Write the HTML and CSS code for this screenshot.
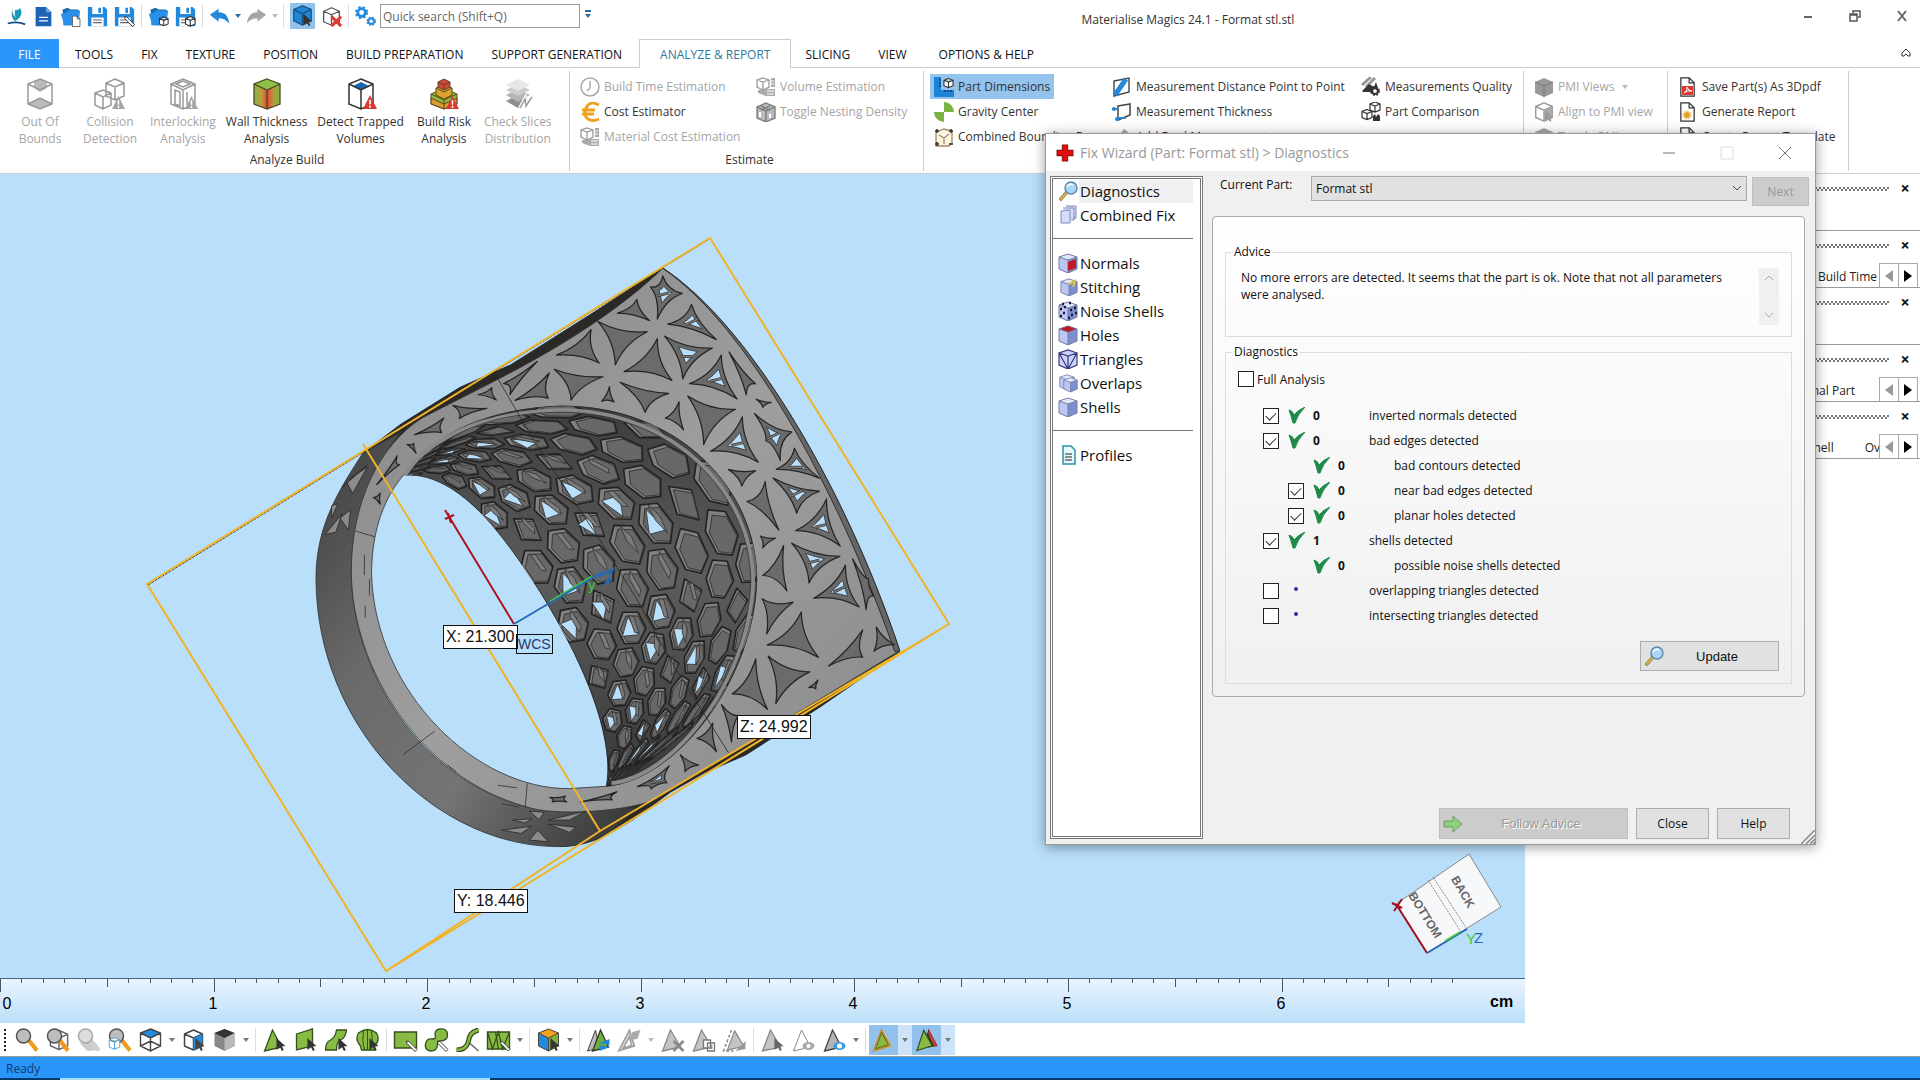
FILE: index.html
```html
<!DOCTYPE html>
<html lang="en">
<head>
	<title>Materialise Magics 24.1 - Format stl.stl</title>
	<meta charset="utf-8">
	<link rel="stylesheet" href="styles.css">
</head>
<body>
	<svg class="defs" aria-hidden="true">
		<defs>
			<symbol id="cube" viewBox="0 0 24 24"><path d="M12 2l9 4v12l-9 4-9-4V6z M3 6l9 4 9-4M12 10v12" fill="#fff" stroke="currentColor" stroke-width="1.5" stroke-linejoin="round"/></symbol>
			<symbol id="wirecube" viewBox="0 0 24 24"><path d="M12 1l10 4v13l-10 5-10-5V5z" fill="#fff"/><path d="M2 5l10-4 10 4-10 5z" fill="#2389dc"/><path d="M12 1l10 4v13l-10 5-10-5V5zM2 5l10 5 10-5M12 10v13M2 18l10-5 10 5" fill="none" stroke="#444" stroke-width="1.4"/></symbol>
			<symbol id="warn" viewBox="0 0 12 12"><path d="M6 0l6 12H0z" fill="currentColor"/><path d="M6 4v4M6 9v2" stroke="#fff" stroke-width="1.4"/></symbol>
			<symbol id="cursor" viewBox="0 0 12 14"><path d="M1 0l10 9-4 0 2 4-2 1-2-4-4 3z" fill="currentColor"/></symbol>
			<symbol id="pen" viewBox="0 0 12 12"><path d="M1 1l2.500 .5 8 8-2 2-8-8z" fill="#fff" stroke="#333"/></symbol>
			<symbol id="folder" viewBox="0 0 24 24"><path d="M3 4l6-2 3 2h9l1 18H4z" fill="#1768ac"/><path d="M1 9l5-1 3-3h14l-2 17H5z" fill="#2990ea"/></symbol>
			<symbol id="disk" viewBox="0 0 24 24"><path d="M1 1h19l3 3v19H1z" fill="#2389dc"/><path d="M6 1h12v8H6zM5 13h14v10H5z" fill="#fff"/><path d="M13 2h3v6h-3z" fill="#2389dc"/><path d="M7 16h10M7 19h10" stroke="#666" stroke-width="1.4"/></symbol>
			<symbol id="page" viewBox="0 0 20 24"><path d="M2 1h10l6 6v16H2z" fill="#fff" stroke="#333" stroke-width="1.5"/><path d="M12 1v6h6" fill="none" stroke="#333" stroke-width="1.5"/></symbol>
			<symbol id="minicube" viewBox="0 0 12 12"><path d="M6 1l5 2v6l-5 2-5-2V3zM1 3l5 2 5-2M6 5v6" fill="#fff" stroke="#333" stroke-width="1.2"/></symbol>
			<symbol id="lens" viewBox="0 0 24 24"><path d="M13 14l3-3 8 10-3 3z" fill="#f09a1c"/><circle cx="9" cy="8" r="7" fill="#bdbdbd" stroke="#555" stroke-width="1.5"/></symbol>
			<symbol id="search" viewBox="0 0 20 20"><path d="M8 10l2 2-7 8-2-2z" fill="#d9b04a" stroke="#77705a" stroke-width=".8"/><circle cx="13" cy="7" r="6" fill="#a9d6f5" stroke="#5b87a8" stroke-width="1.4"/><path d="M9 6q2-4 6-2" stroke="#fff" stroke-width="1.5" fill="none"/></symbol>
			<symbol id="bluecube" viewBox="0 0 20 20"><path d="M1 4l9-3 9 3v12l-9 4-9-4z" fill="#bcc6f2"/><path d="M10 7l9-3v12l-9 4z" fill="#7e8fd0"/><path d="M1 4l9-3 9 3-9 3z" fill="#e2e8fb"/><path d="M1 4l9-3 9 3v12l-9 4-9-4zM1 4l9 3 9-3M10 7v13" fill="none" stroke="#737da5"/></symbol>
			<symbol id="tri" viewBox="0 0 24 24"><path d="M10 2l9 17-17 4z" fill="#87bb43" stroke="#35501d" stroke-width="1.3"/></symbol>
			<symbol id="graytri" viewBox="0 0 24 24"><path d="M10 2l10 17-18 4z" fill="#c4c4c4" stroke="#888" stroke-width="1.3"/></symbol>
			<symbol id="tick" viewBox="0 0 17 17"><path d="M1 3q4 1 5 5Q10 3 17 0q-8 8-10 16H5Q3 8 1 3z" fill="#1d8a4a" stroke="#1d8a4a"/></symbol>
			<symbol id="gearlet" viewBox="0 0 12 12"><circle cx="6" cy="6" r="3.500" fill="#fff" stroke="currentColor" stroke-width="2.500"/><circle cx="6" cy="6" r="5" fill="none" stroke="currentColor" stroke-width="2" stroke-dasharray="2 2"/></symbol>
			<symbol id="calc" viewBox="0 0 20 20"><path d="M7 1l6 2v7l-6 3-6-3V3zM1 3l6 2 6-2M7 5v8" fill="#fff" stroke="#999" stroke-width="1.300"/><path d="M2 13h8v6l-8-3zM10 12h9v7h-9zM15 1h4v9h-4z" fill="#aaa"/><path d="M11 14h7M11 17h7M15 4h3M15 7h3" stroke="#fff"/></symbol>
		</defs>
	</svg>

	<header class="titlebar">
		<div class="quick">
			<svg class="qi" viewBox="0 0 22 24"><path d="M6 3q-2 12 4 14Q20 11 15 2q-2 4-5 2-2 4 0 9Q6 9 6 3z" fill="#1c98b8"/><path d="M1 20q11-3 20 1" stroke="#164f84" stroke-width="2" fill="none"/></svg>
			<svg class="qi" viewBox="0 0 24 24"><path d="M3 1h12l6 6v16H3z" fill="#1d63b4"/><path d="M15 1v6h6z" fill="#6aaae8"/><path d="M7 13h10M7 17h10" stroke="#fff" stroke-width="1.500"/></svg>
			<svg class="qi" viewBox="0 0 24 24"><use href="#folder"/><use href="#page" x="13" y="11" width="11" height="13"/></svg>
			<svg class="qi" viewBox="0 0 24 24"><use href="#disk"/></svg>
			<svg class="qi" viewBox="0 0 24 24"><use href="#disk"/><use href="#pen" x="11" y="11" width="13" height="13"/></svg>
			<i class="qsep"></i>
			<svg class="qi" viewBox="0 0 24 24"><use href="#folder"/><use href="#minicube" x="12" y="11" width="12" height="13"/></svg>
			<svg class="qi" viewBox="0 0 24 24"><use href="#disk"/><use href="#minicube" x="11" y="11" width="13" height="13"/></svg>
			<i class="qsep"></i>
			<svg class="qi" viewBox="0 0 24 24"><path d="M1 10l10-7v4q11 0 12 13-5-6-12-6v4z" fill="#2389dc"/></svg>
			<i class="caret blue"></i>
			<svg class="qi" viewBox="0 0 24 24"><path d="M23 10L13 3v4Q2 7 1 20q5-6 12-6v4z" fill="#a5a5a5"/></svg>
			<i class="caret pale"></i>
			<i class="qsep"></i>
			<span class="qon"><svg class="qi" viewBox="0 0 24 24"><path d="M12 1l10 4v13l-10 5-10-5V5z" fill="#1f86d8"/><path d="M12 1l10 4v13l-10 5-10-5V5zM2 5l10 5 10-5M12 10v13" fill="none" stroke="#1d4f82" stroke-width="1.400"/><g color="#333"><use href="#cursor" x="12" y="10" width="12" height="14"/></g></svg></span>
			<svg class="qi" viewBox="0 0 24 24" color="#555"><use href="#cube"/><path d="M12 12l11 11M23 12L12 23" stroke="#e03a32" stroke-width="3.500"/></svg>
			<i class="qsep"></i>
			<svg class="qi" viewBox="0 0 24 24" color="#2389dc"><use href="#gearlet" x="0" y="0" width="15" height="15"/><use href="#gearlet" x="13" y="12" width="11" height="11"/></svg>
			<input class="quick-search" type="text" aria-label="Quick search" placeholder="Quick search (Shift+Q)">
			<i class="caret blue bar"></i>
		</div>
		<div class="app-title">Materialise Magics 24.1 - Format stl.stl</div>
		<div class="winbtns">
			<button aria-label="Minimize"><svg viewBox="0 0 12 12"><path d="M2 7h8" stroke="#666" stroke-width="2"/></svg></button>
			<button aria-label="Restore"><svg viewBox="0 0 12 12"><path d="M4 3V1h7v6H9M1 4h7v7H1zM1 5h7" fill="none" stroke="#555" stroke-width="1.500"/></svg></button>
			<button aria-label="Exit"><svg viewBox="0 0 12 12"><path d="M2 1l8 10M10 1L2 11" stroke="#666" stroke-width="2"/></svg></button>
		</div>
	</header>

	<nav class="tabs">
		<button class="tab file">FILE</button>
		<button class="tab">TOOLS</button>
		<button class="tab">FIX</button>
		<button class="tab">TEXTURE</button>
		<button class="tab">POSITION</button>
		<button class="tab">BUILD PREPARATION</button>
		<button class="tab">SUPPORT GENERATION</button>
		<button class="tab active">ANALYZE &amp; REPORT</button>
		<button class="tab">SLICING</button>
		<button class="tab">VIEW</button>
		<button class="tab last">OPTIONS &amp; HELP</button>
		<svg class="collapse" viewBox="0 0 10 10"><path d="M1 5l4-4 4 4v3H7L5 6 3 8H1z" fill="none" stroke="#333"/></svg>
	</nav>

	<section class="ribbon">
		<div class="group analyze">
			<div class="bigs">
				<button class="big off"><svg viewBox="0 0 32 32"><path d="M16 1l12 5v20l-12 5-12-5V6z" fill="#fff"/><path d="M10 3l6-2 7 3v6l-7 4-6-4zM4 26l12-6 12 6-12 5z" fill="#bbb"/><path d="M16 1l12 5v20l-12 5-12-5V6zM4 6l12 6 12-6M4 26l12-6 12 6" fill="none" stroke="#999" stroke-width="1.500"/></svg>Out Of<br>Bounds</button>
				<button class="big off"><svg viewBox="0 0 32 32"><path d="M21 1l9 4v13l-9 4-9-4V5zM12 5l9 4 9-4M21 9v13M9 12l8 3v12l-8 4-8-4V15zM1 15l8 4 8-4M9 19v12" fill="#fff" stroke="#999" stroke-width="1.500"/><use href="#warn" x="18" y="18" width="13" height="13"/></svg>Collision<br>Detection</button>
				<button class="big off"><svg viewBox="0 0 32 32"><path d="M16 1l12 5v20l-12 5-12-5V6zM4 6l12 6 12-6M16 12v19M8 12v14l5 2V14zM9 6l7-3 7 3-7 3zM20 14v13" fill="#fff" stroke="#999" stroke-width="1.500"/><use href="#warn" x="18" y="18" width="13" height="13"/></svg>Interlocking<br>Analysis</button>
				<button class="big"><svg viewBox="0 0 32 32"><defs><linearGradient id="heat"><stop offset="0" stop-color="#83b840"/><stop offset=".3" stop-color="#c09a3e"/><stop offset=".5" stop-color="#e8432f"/><stop offset=".75" stop-color="#b49a3e"/><stop offset="1" stop-color="#83b840"/></linearGradient></defs><path d="M16 1l13 5v20l-13 5-13-5V6z" fill="url(#heat)"/><path d="M3 6l13-5 13 5-13 6z" fill="#8cc047"/><path d="M16 1l13 5v20l-13 5-13-5V6zM3 6l13 6 13-6M16 12v19" fill="none" stroke="#4b4a25" stroke-width="1.300"/></svg>Wall Thickness<br>Analysis</button>
				<button class="big"><svg viewBox="0 0 32 32"><path d="M16 1l12 5v20l-12 5-12-5V6z" fill="#fff"/><path d="M8 8l8-4 8 4-8 4z" fill="#1668ae"/><path d="M16 1l12 5v20l-12 5-12-5V6zM4 6l12 6 12-6M16 12v19" fill="none" stroke="#333" stroke-width="1.500"/><g color="#da3832"><use href="#warn" x="18" y="17" width="14" height="14"/></g></svg>Detect Trapped<br>Volumes</button>
				<button class="big"><svg viewBox="0 0 32 32" stroke="#5a4a20"><path d="M16 10l13 6v10l-13 5-13-5V16z" fill="#94b83c"/><path d="M3 20l13 6 13-6v6l-13 5-13-5z" fill="#d99a30"/><path d="M16 6l8 4v7l-8 4-8-4v-7z" fill="#dfa42c"/><path d="M16 1l6 3v5l-6 3-6-3V4z" fill="#d9443a"/><path d="M3 16l13 6 13-6M16 22v9M10 4l6 3 6-3M16 7v5M8 10l8 4 8-4" fill="none"/><g color="#da3832" stroke="none"><use href="#warn" x="18" y="18" width="13" height="13"/></g></svg>Build Risk<br>Analysis</button>
				<button class="big off"><svg viewBox="0 0 32 32"><path d="M4 23l12-6 12 6-12 7z" fill="#8d8d8d"/><path d="M4 17l12-6 12 6-12 7z" fill="#b4b4b4"/><path d="M4 12l12-6 12 6-12 6z" fill="#ccc"/><path d="M4 7l12-6 12 6-12 6z" fill="#e6e6e6"/><path d="M18 30l5-9 1 7 6-9" fill="none" stroke="#fff" stroke-width="4"/><path d="M18 30l5-9 1 7 6-9" fill="none" stroke="#999" stroke-width="1.500"/></svg>Check Slices<br>Distribution</button>
			</div>
			<div class="group-name">Analyze Build</div>
		</div>
		<div class="group estimate">
			<div class="cols">
				<div class="col">
					<button class="row off"><svg viewBox="0 0 20 20"><circle cx="10" cy="10" r="9" fill="#fff" stroke="#aaa" stroke-width="1.500"/><path d="M10 4v7l-3 3" fill="none" stroke="#aaa" stroke-width="1.500"/></svg>Build Time Estimation</button>
					<button class="row"><svg viewBox="0 0 20 20"><path d="M19 3Q10-2 6 6q-3 7 2 11 5 3 11 0M2 8h13M2 12h12" fill="none" stroke="#eea21c" stroke-width="2.800"/></svg>Cost Estimator</button>
					<button class="row off"><svg viewBox="0 0 20 20"><use href="#calc"/></svg>Material Cost Estimation</button>
				</div>
				<div class="col">
					<button class="row off"><svg viewBox="0 0 20 20"><use href="#calc"/></svg>Volume Estimation</button>
					<button class="row off"><svg viewBox="0 0 20 20"><path d="M10 1l9 4v11l-9 4-9-4V5z" fill="#bbb"/><path d="M10 1l9 4v11l-9 4-9-4V5zM1 5l9 4 9-4M10 9v11M5 4l9 4M14 4L5 8" fill="none" stroke="#777" stroke-width="1.300"/><path d="M4 10v5M14 12v4" stroke="#fff" stroke-width="2"/></svg>Toggle Nesting Density</button>
				</div>
			</div>
			<div class="group-name">Estimate</div>
		</div>
		<div class="group measure">
			<div class="cols">
				<div class="col">
					<button class="row on"><svg viewBox="0 0 20 20"><path d="M0 0h7v13h13v7H0z" fill="#1c83d6"/><path d="M7 3H5m2 3H5m2 3H5m6 6v-2m3 2v-2m3 2v-2" stroke="#114"/><use href="#minicube" x="9" y="0" width="11" height="12"/></svg>Part Dimensions</button>
					<button class="row"><svg viewBox="0 0 20 20"><path d="M10 0v10h10A10 10 0 0 0 10 0zM10 20V10H0a10 10 0 0 0 10 10z" fill="#7ab342"/></svg>Gravity Center</button>
					<button class="row"><svg viewBox="0 0 20 20"><path d="M2 5l8-3 8 2v12l-3 3H2zM5 8l5 3 5-4M10 11v6" fill="#fff4d8" stroke="#987" stroke-width="1.300"/><path d="M1 4h4M3 2v4M15 4h4M17 2v4M1 17h4M3 15v4M15 17h4" stroke="#333" stroke-width="1.500"/></svg>Combined Bounding Box</button>
				</div>
				<div class="col">
					<button class="row"><svg viewBox="0 0 20 20"><path d="M2 4l15-3v14L2 19z" fill="#fff" stroke="#444" stroke-width="1.400"/><path d="M14 2L3 18" stroke="#2389dc" stroke-width="5"/></svg>Measurement Distance Point to Point</button>
					<button class="row"><svg viewBox="0 0 20 20"><path d="M6 4l12-2v11L6 18z" fill="#fff" stroke="#444" stroke-width="1.500"/><path d="M0 7h6M4 16h10" stroke="#2389dc" stroke-width="2"/><circle cx="2" cy="7" r="2" fill="#2389dc"/><circle cx="5" cy="17" r="2" fill="#2389dc"/></svg>Measurement Thickness</button>
					<button class="row"><svg viewBox="0 0 20 20"><path d="M1 16l11-14 4 3-4 10 6-5v9H3z" fill="#aaa"/></svg>Add Dual Measurement</button>
				</div>
				<div class="col">
					<button class="row"><svg viewBox="0 0 20 20" color="#333"><path d="M1 8l9-8M5 10l9-9" stroke="#999" stroke-width="3"/><path d="M1 14l7-7 5 3 2-5 3 10H2z" fill="#333"/><use href="#gearlet" x="9" y="9" width="10" height="10"/></svg>Measurements Quality</button>
					<button class="row"><svg viewBox="0 0 20 20"><use href="#minicube" x="8" y="-1" width="12" height="12"/><use href="#minicube" x="0" y="6" width="12" height="13"/><path d="M12 19v-5l2-2 1 3 2-3 2 2v5z" fill="#333"/></svg>Part Comparison</button>
				</div>
			</div>
		</div>
		<div class="group pmi">
			<div class="col">
				<button class="row off"><svg viewBox="0 0 20 20"><path d="M10 1l9 4v11l-9 4-9-4V5z" fill="#999"/><path d="M1 5l9 4 9-4M10 9v11" fill="none" stroke="#777"/></svg>PMI Views<i class="caret pale"></i></button>
				<button class="row off"><svg viewBox="0 0 20 20" color="#999"><use href="#cube" x="-1" y="-1" width="22" height="22"/><path d="M10 9l8-4v11l-8 4z" fill="#aaa"/><use href="#cursor" x="10" y="8" width="10" height="12"/></svg>Align to PMI view</button>
				<button class="row off"><svg viewBox="0 0 20 20"><path d="M10 1l9 4v11l-9 4-9-4V5z" fill="#aaa"/></svg>Toggle PMI</button>
			</div>
		</div>
		<div class="group report">
			<div class="col">
				<button class="row"><svg viewBox="0 0 20 20"><use href="#page" x="1" y="0" width="17" height="20"/><path d="M4 9h11v9H4z" fill="#dc3a33"/><path d="M6 16q4-2 3-6 1 4 5 4-5-1-8 2" fill="none" stroke="#fff"/></svg>Save Part(s) As 3Dpdf</button>
				<button class="row"><svg viewBox="0 0 20 20" color="#e8a020"><use href="#page" x="1" y="0" width="17" height="20"/><circle cx="9" cy="13" r="3" fill="#e8a020"/><circle cx="9" cy="13" r="4" fill="none" stroke="#e8a020" stroke-dasharray="2 1"/></svg>Generate Report</button>
				<button class="row"><svg viewBox="0 0 20 20"><use href="#page" x="1" y="0" width="17" height="20"/></svg>Create Report Template</button>
			</div>
		</div>
	</section>

	<main class="work">
		<div class="stage">
			<svg class="scene" viewBox="0 174 1525 804" preserveAspectRatio="xMinYMin slice">
				<defs>
					<linearGradient id="side" x1="0" x2="1" y1="0" y2="1"><stop offset="0" stop-color="#3c3c3c"/><stop offset=".35" stop-color="#6a6a6a"/><stop offset=".65" stop-color="#747474"/><stop offset="1" stop-color="#303030"/></linearGradient>
					<linearGradient id="face" x1="0" x2="1" y1="0" y2="1"><stop offset="0" stop-color="#858585"/><stop offset=".5" stop-color="#9e9e9e"/><stop offset="1" stop-color="#8a8a8a"/></linearGradient>
					<linearGradient id="bore" x1="0" x2="0" y1="0" y2="1"><stop offset="0" stop-color="#3d3d3d"/><stop offset=".45" stop-color="#5c5c5c"/><stop offset="1" stop-color="#383838"/></linearGradient>
					<clipPath id="boreclip"><path d="M250 625C290 550 420 462 620 456C900 455 1085 660 1085 880C1080 1120 900 1370 728 1387C760 1200 560 870 450 740C390 670 320 620 250 625z"/></clipPath>
				</defs>
				<path d="M147 584L710 237" stroke="#333" stroke-dasharray="3 1" transform="translate(1 1)"/>
				<!-- ring model, drawn in its own space -->
				<g transform="translate(300 220) scale(.4209 .4082)" stroke-linejoin="round">
					<path d="M862 116L700 225 600 290 500 355 380 410 240 500 150 570 240 560 500 420 850 150z" fill="#2a2926" stroke="#222" stroke-width="2"/>
					<path d="M1425 1058L1240 1190 1060 1310 960 1355 880 1402 790 1470C740 1500 700 1532 620 1535L640 1420 900 1360 1380 1055z" fill="#2a2926" stroke="#222" stroke-width="2"/>
					<path d="M150 570C80 680 38 760 38 880C40 1250 330 1540 620 1535C700 1532 740 1500 800 1440L540 1438C280 1370 122 1100 122 860C122 740 160 620 240 520z" fill="url(#side)" stroke="#333" stroke-width="2"/>
					<path fill-rule="evenodd" d="M862 118C1060 250 1290 640 1425 1055L1050 1290 830 1425C760 1450 600 1460 540 1438C290 1370 122 1100 122 860C122 690 190 550 290 485L480 385C620 310 760 220 862 118zM250 620C190 690 170 780 170 870C180 1160 420 1395 640 1393L730 1387C900 1370 1080 1120 1085 880C1085 660 900 455 620 456C450 462 320 520 250 620z" fill="url(#face)" stroke="#333" stroke-width="2"/>
					<path d="M862 118C1060 250 1290 640 1425 1055l-12 2C1270 640 1060 260 862 118z" fill="#666" stroke="#222" stroke-width="2"/>
					<path d="M250 625C290 550 420 462 620 456C900 455 1085 660 1085 880C1080 1120 900 1370 728 1387C760 1200 560 870 450 740C390 670 320 620 250 625z" fill="url(#bore)" stroke="#222" stroke-width="2"/>
					<g id="lattice" clip-path="url(#boreclip)"></g>
					<g id="petals"></g>
					<path d="M250 625C290 550 420 470 620 466C890 466 1075 670 1076 885C1070 1110 900 1360 740 1380" fill="none" stroke="#8a8a8a" stroke-width="10"/>
					<path d="M270 612C340 520 460 472 620 471C885 471 1070 670 1071 885C1065 1110 900 1350 740 1374M132 762l46 14M245 1310l75-58M540 1380l-5 60M153 820v50M165 880v40M155 945v30M350 1335l22 18M470 1385l45 6M480 1430l40 8" fill="none" stroke="#333" stroke-width="2"/>
					<g fill="#8b8b8b" stroke="#292929" stroke-width="2">
						<path d="M100 655l60-55-25 20zM60 770l40-50-15 45zM110 640l50-35-35 65zM95 730l25-20-5 50zM75 700l15-5-15 35z"/>
						<path d="M505 1470l45-3-15 10zM545 1448l35 3-12 18zM590 1470l90-22-40 22zM480 1495l70-10-25 18zM590 1480l65 8-15 12zM565 1495l25 28-45-4z"/>
					</g>
					<path d="M468 385l90 160 155 240 85 140 80 150 140 230" fill="none" stroke="#2d2a1c" stroke-width="2"/>
				</g>
				<g fill="none" stroke="#f0b429" stroke-width="2">
					<path d="M710 238L949 624 386 971 147 584zM363 444L600 831M386 971L600 831 949 624"/>
				</g>
				<path d="M445 510L514 624M445 519l9-4M448 513l3 10" stroke="#b01020" stroke-width="2"/>
				<path d="M550 602L592 577" stroke="#43c83b" stroke-width="3"/>
				<path d="M514 624L604 571M598 577l15-8-7 14 6-3" stroke="#2669b8" stroke-width="2" fill="none"/>
				<text x="588" y="590" class="axis green">y</text>
				<g class="navcube">
					<path d="M1396 904l73-50 32 53-74 46z" fill="#f7f8fa" stroke="#888"/>
					<path d="M1428 880l33 52M1433 877l34 52" fill="none" stroke="#888" stroke-dasharray="2 1"/>
					<path d="M1396 904l31 49M1392 903l10 5M1394 911l8-12" stroke="#a3101c" stroke-width="2"/>
					<path d="M1427 953l40-24" stroke="#2669b8" stroke-width="2"/><path d="M1445 941l15-9" stroke="#43c83b" stroke-width="2"/>
					<text class="facename" x="1463" y="896" transform="rotate(60 1463 892)">BACK</text>
					<text class="facename" x="1425" y="919" transform="rotate(58 1425 915)">BOTTOM</text>
					<text x="1466" y="944" class="axis green">Y</text><text x="1474" y="943" class="axis">Z</text>
				</g>
			</svg>
			<span class="dim dim-x">X: 21.300</span>
			<span class="dim wcs">WCS</span>
			<span class="dim dim-y">Y: 18.446</span>
			<span class="dim dim-z">Z: 24.992</span>
		</div>
		<svg class="ruler" id="ruler"></svg>
		<aside class="docks">
			<div class="dock"><i class="grip"></i><button class="x" aria-label="Close panel">×</button></div>
			<div class="dock"><i class="grip"></i><button class="x" aria-label="Close panel">×</button><div class="dock-tabs"><span>Build Time</span><button aria-label="Previous"><i></i></button><button aria-label="Next tab"><i></i></button></div></div>
			<div class="dock"><i class="grip"></i><button class="x" aria-label="Close panel">×</button></div>
			<div class="dock"><i class="grip"></i><button class="x" aria-label="Close panel">×</button><div class="dock-tabs"><span class="gap">Internal Part</span><button aria-label="Previous"><i></i></button><button aria-label="Next tab"><i></i></button></div></div>
			<div class="dock"><i class="grip"></i><button class="x" aria-label="Close panel">×</button><div class="dock-tabs"><span class="gap">Shell</span><span class="cut">Ov</span><button aria-label="Previous"><i></i></button><button aria-label="Next tab"><i></i></button></div></div>
		</aside>
	</main>

	<footer class="viewbar">
		<i class="dots"></i>
		<svg viewBox="0 0 24 24"><use href="#lens"/></svg>
		<svg viewBox="0 0 24 24" color="#666"><use href="#cube" x="2" y="0" width="23" height="24"/><use href="#lens"/></svg>
		<svg viewBox="0 0 24 24" class="faded"><path d="M3 15l8-2 13 9-13 1z" fill="#999"/><use href="#lens"/></svg>
		<svg viewBox="0 0 24 24" color="#3a9be0"><use href="#lens"/><use href="#cube" x="0" y="8" width="14" height="15"/></svg>
		<svg viewBox="0 0 24 24"><use href="#wirecube"/></svg><i class="caret"></i>
		<svg viewBox="0 0 24 24" color="#444"><use href="#cube" width="24" height="24"/><path d="M12 10l9-4v12l-9 4z" fill="#2389dc"/><use href="#cursor" x="13" y="10" width="11" height="13"/></svg>
		<svg viewBox="0 0 24 24"><path d="M12 1l10 4v13l-10 5-10-5V5z" fill="#888"/><path d="M12 10l10-5v13l-10 5z" fill="#b8b8b8"/><path d="M12 1l10 4-10 5L2 5z" fill="#333"/></svg><i class="caret"></i>
		<i class="bsep"></i>
		<svg viewBox="0 0 24 24" color="#333"><use href="#tri"/><use href="#cursor" x="13" y="10" width="11" height="13"/></svg>
		<svg viewBox="0 0 24 24" color="#333"><path d="M3 6l16-5v17L3 22z" fill="#87bb43" stroke="#35501d" stroke-width="1.300"/><use href="#cursor" x="13" y="10" width="11" height="13"/></svg>
		<svg viewBox="0 0 24 24" color="#333"><path d="M12 2h10q-1 8-6 10-4 2-4 10H1q0-8 5-10 5-3 6-10z" fill="#87bb43" stroke="#35501d" stroke-width="1.300"/><use href="#cursor" x="13" y="10" width="11" height="13"/></svg>
		<svg viewBox="0 0 24 24" color="#333"><path d="M5 18Q-1 11 3 5q9-7 18 0 4 7-2 13v4H6z" fill="#87bb43" stroke="#35501d" stroke-width="1.300"/><path d="M8 3q-2 9 1 19M12 1v21M16 3q2 9-1 19" fill="none" stroke="#35501d"/><use href="#cursor" x="13" y="10" width="11" height="13"/></svg>
		<i class="bsep"></i>
		<svg viewBox="0 0 24 24"><path d="M1 4h22v16H1z" fill="#87bb43" stroke="#35501d" stroke-width="1.400"/><use href="#pen" x="12" y="12" width="12" height="12"/></svg>
		<svg viewBox="0 0 24 24"><path d="M11 9Q9 2 15 1q8-1 8 6 0 6-8 6-2 0-2 3 0 7-7 7-6-1-5-7 1-6 7-5 3 0 3-2z" fill="#87bb43" stroke="#35501d" stroke-width="1.300"/><use href="#pen" x="12" y="12" width="12" height="12"/></svg>
		<svg viewBox="0 0 24 24"><path d="M1 22q10 0 12-9 1-9 10-11" fill="none" stroke="#35501d" stroke-width="5"/><path d="M1 22q10 0 12-9 1-9 10-11" fill="none" stroke="#87bb43" stroke-width="2.500"/><path d="M13 14l10 9" stroke="#666" stroke-width="1.500"/></svg>
		<svg viewBox="0 0 24 24"><path d="M1 4h22v17H1z" fill="#87bb43" stroke="#35501d" stroke-width="1.400"/><path d="M1 4l5 17 6-17 4 17 7-17M9 4l3 17" fill="none" stroke="#35501d" stroke-width="1.300"/><use href="#pen" x="13" y="12" width="11" height="12"/></svg><i class="caret"></i>
		<i class="bsep"></i>
		<svg viewBox="0 0 24 24" color="#333"><path d="M2 5l10 5v13L2 18z" fill="#2389dc"/><path d="M12 10l10-5v13l-10 5z" fill="#7eb23d"/><path d="M12 1l10 4-10 5L2 5z" fill="#f3a01c"/><path d="M12 1l10 4v13l-10 5-10-5V5zM2 5l10 5 10-5M12 10v13" fill="none" stroke="#444"/><use href="#cursor" x="13" y="10" width="11" height="13"/></svg><i class="caret"></i>
		<i class="bsep"></i>
		<svg viewBox="0 0 24 24"><path d="M9 2l4 18-12 3z" fill="#bbb" stroke="#444"/><path d="M14 2l8 17-16 4z" fill="#6fae38" stroke="#333" stroke-width="1.300"/><path d="M13 15l10-4v6zM23 19l-10 4v-6z" fill="#2389dc"/></svg>
		<svg viewBox="0 0 24 24"><path d="M12 2l5 16-16 5zM12 9l-6 11 8-3z" fill="#ccc" stroke="#999" stroke-width="1.300"/><path d="M12 12l3-8 8-2-3 9z" fill="#aaa"/></svg><i class="caret pale"></i>
		<svg viewBox="0 0 24 24"><use href="#graytri"/><path d="M13 13l10 10M23 13L13 23" stroke="#888" stroke-width="2.500"/></svg>
		<svg viewBox="0 0 24 24"><use href="#graytri"/><path d="M12 12h7v8h-7zM16 15h7v8h-7zM18 18h3M18 20h3" fill="#fff" stroke="#777" stroke-width="1.300"/></svg>
		<svg viewBox="0 0 24 24"><path d="M9 2L1 23h10" fill="none" stroke="#888" stroke-dasharray="3 2" stroke-width="1.500"/><use href="#graytri" x="3" y="0" width="22" height="24"/><path d="M13 23l10-10v8z" fill="#999"/></svg>
		<i class="bsep"></i>
		<svg viewBox="0 0 24 24" color="#666"><use href="#graytri"/><use href="#cursor" x="13" y="10" width="11" height="13"/></svg>
		<svg viewBox="0 0 24 24"><path d="M10 2l9 17-17 4z" fill="#fff" stroke="#888"/><ellipse cx="17" cy="18" rx="6" ry="4" fill="#aaa"/><circle cx="17" cy="18" r="2" fill="#fff"/></svg>
		<svg viewBox="0 0 24 24"><path d="M10 2l9 17-17 4z" fill="#b5b5b5" stroke="#444" stroke-width="1.300"/><ellipse cx="17" cy="18" rx="6" ry="4" fill="#3a9be0"/><circle cx="17" cy="18" r="2.500" fill="#fff"/></svg><i class="caret"></i>
		<i class="bsep"></i>
		<svg viewBox="0 0 24 24" class="lit"><path d="M12 2l9 17-7 1z" fill="#ccc"/><path d="M10 2l9 16-17 5z" fill="#8db840" stroke="#c78e2a" stroke-width="2"/><path d="M10 4l7 13-13 4z" fill="none" stroke="#4b6b22"/></svg><span class="tint"><i class="caret"></i></span>
		<svg viewBox="0 0 24 24" class="lit"><path d="M14 1l9 17-8 1z" fill="#d8402f" stroke="#822"/><path d="M12 2l8 16-6 2z" fill="#333"/><path d="M9 2l9 16-16 5z" fill="#87bb43" stroke="#35501d" stroke-width="1.300"/></svg><span class="tint"><i class="caret"></i></span>
	</footer>
	<div class="status">Ready</div>
	<div class="strip"></div>

	<section class="wizard" role="dialog" aria-label="Fix Wizard">
		<header class="wiz-title">
			<svg viewBox="0 0 17 17"><path d="M6 1h5v5h5v5h-5v5H6v-5H1V6h5z" fill="#e60c0c" stroke="#8c1010"/></svg>
			<span>Fix Wizard (Part: Format stl) &gt; Diagnostics</span>
			<button aria-label="Minimize"><svg viewBox="0 0 14 14"><path d="M1 7h12" stroke="#777"/></svg></button>
			<button aria-label="Maximize"><svg viewBox="0 0 14 14"><path d="M1 1h12v12H1z" fill="none" stroke="#ddd"/></svg></button>
			<button aria-label="Close wizard"><svg viewBox="0 0 14 14"><path d="M1 1l12 12M13 1L1 13" stroke="#777"/></svg></button>
		</header>
		<div class="wiz-body">
			<nav class="pages">
				<button class="pg current"><svg viewBox="0 0 20 20"><use href="#search"/></svg><span>Diagnostics</span></button>
				<button class="pg"><svg viewBox="0 0 20 20"><path d="M8 1h10v12h-3M5 3h11v12h-3M3 6l9-1v13H3z" fill="#d5dcf7" stroke="#7b8cbb"/></svg><span>Combined Fix</span></button>
				<hr>
				<button class="pg"><svg viewBox="0 0 20 20"><use href="#bluecube"/><path d="M10 9l8-3v9l-8 3z" fill="#c11c25"/></svg><span>Normals</span></button>
				<button class="pg"><svg viewBox="0 0 20 20"><use href="#bluecube" x="2" y="1" width="18" height="18"/><path d="M11 7l6-3-2 6" fill="none" stroke="#ddc23a" stroke-width="2"/></svg><span>Stitching</span></button>
				<button class="pg"><svg viewBox="0 0 20 20"><use href="#bluecube"/><path d="M4 3h2M11 2h2M6 6h2M2 8h2M5 12h2M2 15h2M12 9h2M16 7h2M13 14h2M17 12h2M10 17h2" stroke="#16183a" stroke-width="2.500"/></svg><span>Noise Shells</span></button>
				<button class="pg"><svg viewBox="0 0 20 20"><use href="#bluecube"/><path d="M2 4l8-3 8 3-8 3z" fill="#b81c30"/></svg><span>Holes</span></button>
				<button class="pg"><svg viewBox="0 0 20 20"><path d="M1 4l9-3 9 3v12l-9 4-9-4z" fill="#cdd3f8"/><path d="M1 4l9 16 9-16M10 7v13M1 4l9 3 9-3v12l-9 4-9-4V4l9-3 9 3" fill="none" stroke="#34397d" stroke-width="1.200"/></svg><span>Triangles</span></button>
				<button class="pg"><svg viewBox="0 0 20 20"><use href="#bluecube" x="1" y="0" width="16" height="18"/><use href="#bluecube" x="5" y="3" width="15" height="17"/></svg><span>Overlaps</span></button>
				<button class="pg"><svg viewBox="0 0 20 20"><use href="#bluecube"/></svg><span>Shells</span></button>
				<hr>
				<button class="pg"><svg viewBox="0 0 20 20"><path d="M5 1h8l4 4v14H5z" fill="#e8f7fb" stroke="#2a90a8" stroke-width="1.500"/><path d="M7 9h7M7 12h7M7 15h7" stroke="#222"/></svg><span>Profiles</span></button>
			</nav>
			<div class="pane">
				<div class="part-row">
					<label for="part">Current Part:</label>
					<div class="select-box"><select id="part"><option>Format stl</option></select><svg viewBox="0 0 10 6"><path d="M1 1l4 4 4-4" fill="none" stroke="#444"/></svg></div>
					<button class="btn next" disabled>Next</button>
				</div>
				<div class="sheet">
					<fieldset class="advice">
						<legend>Advice</legend>
						<p>No more errors are detected. It seems that the part is ok. Note that not all parameters were analysed.</p>
						<div class="scroller"><svg viewBox="0 0 10 6"><path d="M1 5l4-4 4 4" fill="none" stroke="#aaa"/></svg><svg viewBox="0 0 10 6"><path d="M1 1l4 4 4-4" fill="none" stroke="#aaa"/></svg></div>
					</fieldset>
					<fieldset class="diag">
						<legend>Diagnostics</legend>
						<label class="full"><input type="checkbox">Full Analysis</label>
						<label class="check"><input type="checkbox" checked><svg><use href="#tick"/></svg><b>0</b>inverted normals detected</label>
						<label class="check"><input type="checkbox" checked><svg><use href="#tick"/></svg><b>0</b>bad edges detected</label>
						<div class="check sub"><i></i><svg><use href="#tick"/></svg><b>0</b>bad contours detected</div>
						<label class="check sub"><input type="checkbox" checked><svg><use href="#tick"/></svg><b>0</b>near bad edges detected</label>
						<label class="check sub"><input type="checkbox" checked><svg><use href="#tick"/></svg><b>0</b>planar holes detected</label>
						<label class="check"><input type="checkbox" checked><svg><use href="#tick"/></svg><b>1</b>shells detected</label>
						<div class="check sub"><i></i><svg><use href="#tick"/></svg><b>0</b>possible noise shells detected</div>
						<label class="check"><input type="checkbox"><svg><circle cx="8" cy="7" r="2" fill="#2f2fa8"/></svg><b></b>overlapping triangles detected</label>
						<label class="check"><input type="checkbox"><svg><circle cx="8" cy="7" r="2" fill="#2f2fa8"/></svg><b></b>intersecting triangles detected</label>
						<button class="btn update"><svg viewBox="0 0 20 20"><use href="#search"/></svg><span>Update</span></button>
					</fieldset>
				</div>
				<div class="wiz-foot">
					<button class="btn follow" disabled><svg viewBox="0 0 20 18"><path d="M1 6h9V1l9 8-9 8v-5H1z" fill="#8fd07c" stroke="#6aa05c"/></svg><span>Follow Advice</span></button>
					<button class="btn">Close</button>
					<button class="btn">Help</button>
				</div>
			</div>
		</div>
		<svg class="sizer" viewBox="0 0 14 14"><path d="M0 14L14 0M5 14l9-9M9 14l5-5M12 14l2-2" stroke="#888" stroke-width="1.500"/></svg>
	</section>

	<script src="script.js"></script>
</body>
</html>
```

FILE: styles.css
```css
* {
	box-sizing: border-box;
}
body {
	margin: 0;
	height: 100vh;
	display: flex;
	flex-direction: column;
	overflow: hidden;
	position: relative;
	background-color: #fff;
	color: #333;
	font-family: "Open Sans", "Noto Sans", sans-serif;
	font-size: 12px;
}
button, input, select {
	font: inherit;
	color: inherit;
}
button {
	padding: 0;
	border: 0;
	background: none;
}
.defs {
	position: absolute;
	width: 0;
	height: 0;
}

/* title bar */
.titlebar {
	height: 39px;
	flex: none;
	display: flex;
	align-items: flex-start;
	padding: 3px 12px 0 6px;
}
.quick {
	display: flex;
	align-items: center;
	gap: 6px;
	height: 26px;
}
.qi {
	width: 21px;
	height: 21px;
}
.qsep {
	width: 1px;
	height: 24px;
	background-color: #ddd;
}
.qon {
	background-color: #92c2ec;
	padding: 2px;
	height: 26px;
}
.caret {
	width: 0;
	border: 3px solid transparent;
	border-top: 4px solid #777;
	border-bottom: 0;
}
.quick .caret {
	margin: 0 -1px;
}
.caret.blue {
	border-top-color: #2d6c9e;
}
.caret.pale {
	border-top-color: #bbb;
}
.caret.bar {
	position: relative;
}
.caret.bar::before {
	content: "";
	position: absolute;
	left: -3px;
	top: -8px;
	width: 6px;
	height: 2px;
	background-color: #2d6c9e;
}
.quick-search {
	width: 200px;
	height: 24px;
	margin-left: -2px;
	border: 1px solid #999;
	padding: 0 2px;
}
.quick-search::placeholder {
	color: #666;
}
.app-title {
	flex: 1;
	padding-right: 16px;
	text-align: center;
	line-height: 34px;
}
.winbtns {
	display: flex;
	gap: 35px;
	padding-top: 7px;
}
.winbtns svg {
	width: 12px;
	height: 12px;
	display: block;
}

/* ribbon tabs */
.tabs {
	flex: none;
	display: flex;
	height: 29px;
	border-bottom: 1px solid #ccc;
	color: #111;
}
.tab {
	padding: 0 14px;
	height: 29px;
	line-height: 32px;
}
.tab.file {
	width: 59px;
	margin-right: 2px;
	background-color: #2a96fa;
	color: #fff;
}
.tab.active {
	margin-left: 3px;
	padding: 0 20px;
	border: 1px solid #ccc;
	border-bottom: 0;
	background-color: #fff;
	color: #2b7a9e;
	line-height: 30px;
}
.tab.last {
	margin-left: 4px;
}
.collapse {
	width: 10px;
	height: 10px;
	margin: 9px 9px 0 auto;
}

/* ribbon */
.ribbon {
	flex: none;
	display: flex;
	height: 106px;
	padding: 3px 0 2px;
	border-bottom: 1px solid #c8d0d6;
}
.group {
	border-right: 1px solid #ccc;
	padding: 3px 0 0 6px;
}
.analyze {
	width: 570px;
	padding-left: 5px;
}
.estimate {
	width: 354px;
}
.measure {
	width: 600px;
}
.pmi {
	width: 144px;
}
.report {
	width: 181px;
}
.bigs {
	display: flex;
	height: 75px;
	padding-top: 1px;
}
.big {
	min-width: 70px;
	padding: 0 5px;
	line-height: 17px;
}
.big svg {
	display: block;
	width: 32px;
	height: 32px;
	margin: 0 auto 3px;
}
.off {
	color: #a5a5a5;
}
.group-name {
	text-align: center;
	line-height: 22px;
}
.cols {
	display: grid;
	height: 75px;
}
.estimate .cols {
	grid-template-columns: 176px 1fr;
}
.measure .cols {
	grid-template-columns: 178px 249px 1fr;
}
.col {
	display: flex;
	flex-direction: column;
	align-items: flex-start;
}
.row {
	display: flex;
	align-items: center;
	gap: 4px;
	height: 25px;
	padding: 0 4px;
	white-space: nowrap;
}
.row svg {
	width: 20px;
	height: 20px;
}
.row .caret {
	margin-left: 4px;
}
.row.on {
	background-color: #94c3ed;
}

/* viewport, ruler and docked panels */
.work {
	flex: 1;
	min-height: 0;
	display: grid;
	grid-template-columns: 1fr 395px;
	grid-template-rows: 1fr 45px;
}
.stage {
	position: relative;
	overflow: hidden;
	min-height: 0;
	background-color: #badffa;
}
.scene {
	display: block;
	width: 100%;
	height: 100%;
}
.axis {
	font-family: "Liberation Sans", sans-serif;
	font-size: 15px;
	fill: #2669b8;
}
.axis.green {
	fill: #43c83b;
}
.facename {
	font-family: "Liberation Sans", sans-serif;
	font-size: 12px;
	font-weight: bold;
	fill: #666;
	text-anchor: middle;
}
.dim {
	position: absolute;
	border: 1px solid #111;
	background-color: #fff;
	color: #111;
	padding: 0 2px;
	font: 16px/22px "Liberation Sans", sans-serif;
}
.dim-x {
	left: 443px;
	top: 451px;
}
.dim-y {
	left: 454px;
	top: 715px;
}
.dim-z {
	left: 737px;
	top: 541px;
}
.wcs {
	left: 516px;
	top: 460px;
	padding: 0 1px;
	background: none;
	color: #1d3d70;
	font-size: 14px;
	line-height: 18px;
}
.ruler {
	grid-row: 2;
	width: 100%;
	height: 45px;
	border-top: 1px solid #4d6378;
	background: linear-gradient(#e9f4fd, #bcdff9);
	font: 16px "Liberation Sans", sans-serif;
}
.docks {
	grid-column: 2;
	grid-row: 1 / 3;
}
.dock {
	height: 57px;
	padding: 10px 10px 0 0;
	border-bottom: 1px solid #999;
	color: #222;
	position: relative;
	display: flex;
	align-items: flex-start;
	justify-content: flex-end;
}
.grip {
	flex: 1;
	height: 4px;
	margin: 3px 11px 0 0;
	background: repeating-conic-gradient(#777 0 25%, transparent 0 50%) 0 0 / 4px 4px;
}
.x {
	width: 10px;
	font-size: 16px;
	font-weight: bold;
	line-height: 9px;
	color: #111;
}
.dock-tabs {
	position: absolute;
	right: 2px;
	bottom: 0;
	display: flex;
	height: 24px;
	line-height: 28px;
}
.dock-tabs span {
	padding-right: 3px;
}
.dock-tabs .gap {
	padding-right: 25px;
}
.dock-tabs .gap + .cut {
	padding: 0 0 0 6px;
}
.dock-tabs button {
	width: 20px;
	margin-left: -1px;
	padding-left: 5px;
	border: 1px solid #aaa;
	border-bottom: 0;
}
.dock-tabs button i {
	display: block;
	width: 0;
	border: 6px solid transparent;
	border-left: 8px solid #000;
	border-right: 0;
}
.dock-tabs span + button i {
	border-left: 0;
	border-right: 8px solid #999;
}

/* bottom toolbar */
.viewbar {
	flex: none;
	display: flex;
	align-items: center;
	height: 34px;
	border-bottom: 1px solid #999;
}
.viewbar svg {
	width: 31px;
	height: 30px;
	padding: 3px;
}
.viewbar .lit {
	width: 29px;
	background-color: #92c2ec;
}
.viewbar .caret {
	margin: 0 3px;
}
.tint {
	display: flex;
	align-items: center;
	height: 30px;
	padding: 0 1px;
	background-color: #cde4f8;
}
.faded {
	opacity: .5;
	filter: grayscale(1);
}
.dots {
	width: 2px;
	height: 22px;
	margin: 0 5px 0 4px;
	background: repeating-linear-gradient(#222 0 2px, transparent 2px 4px);
}
.bsep {
	width: 1px;
	height: 24px;
	margin: 0 3px;
	background-color: #ddd;
}
.status {
	flex: none;
	height: 21px;
	padding-left: 6px;
	line-height: 24px;
	background-color: #2a96fa;
	color: #123a6e;
}
.strip {
	flex: none;
	height: 2px;
	background: linear-gradient(90deg, #04396c 60px, #a9dcfb 60px 490px, #04396c 490px);
}

/* fix wizard */
.wizard {
	position: absolute;
	left: 1045px;
	top: 133px;
	width: 771px;
	height: 712px;
	display: flex;
	flex-direction: column;
	border: 1px solid #999;
	background-color: #f0f0f0;
	box-shadow: 0 2px 12px rgba(0, 0, 0, .4);
	color: #111;
}
.wiz-title {
	flex: none;
	display: flex;
	align-items: center;
	height: 37px;
	padding: 0 23px 0 10px;
	background-color: #fff;
	color: #999;
	font-size: 14px;
}
.wiz-title > svg {
	width: 18px;
	height: 18px;
	margin-right: 6px;
}
.wiz-title span {
	flex: 1;
}
.wiz-title button {
	margin-left: 44px;
}
.wiz-title button svg {
	display: block;
	width: 14px;
	height: 14px;
}
.wiz-body {
	flex: 1;
	display: flex;
	padding: 5px 5px 5px 4px;
}
.pages {
	width: 153px;
	padding: 0 7px 0 0;
	border: 3px double #777;
	background-color: #fff;
}
.pg {
	display: flex;
	align-items: center;
	width: 100%;
	height: 24px;
	padding-left: 5px;
	font-size: 15px;
	text-align: left;
}
.pg svg {
	width: 20px;
	height: 20px;
	margin-right: 1px;
}
.pg span {
	flex: 1;
	padding-left: 1px;
	line-height: 23px;
	white-space: nowrap;
}
.current span {
	background-color: #f0f0f0;
}
.pages hr {
	height: 1px;
	margin: 11px 0 12px;
	border: 0;
	background-color: #777;
}
.pane {
	flex: 1;
	display: flex;
	flex-direction: column;
	padding: 0 5px 0 9px;
}
.part-row {
	display: flex;
	height: 40px;
	margin-right: -4px;
	padding-left: 8px;
}
.part-row label {
	width: 91px;
	line-height: 18px;
}
.select-box {
	flex: 1;
	position: relative;
	margin-right: 5px;
}
.select-box select {
	appearance: none;
	width: 100%;
	height: 25px;
	padding: 0 4px;
	border: 1px solid #aaa;
	border-radius: 0;
	background-color: #e1e1e1;
}
.select-box svg {
	position: absolute;
	right: 5px;
	top: 9px;
	width: 10px;
	height: 6px;
}
.btn {
	width: 73px;
	height: 31px;
	border: 1px solid #adadad;
	background-color: #e1e1e1;
}
.btn:disabled {
	border-color: #bfbfbf;
	background-color: #ccc;
	color: #999;
}
.btn.next {
	width: 57px;
	height: 29px;
	margin-top: 1px;
}
.sheet {
	height: 481px;
	padding: 27px 12px 0;
	border: 1px solid #aaa;
	border-radius: 4px;
	background: linear-gradient(#fff, #f0f0f0);
}
fieldset {
	margin: 0;
	padding: 0;
	border: 1px solid #dcdcdc;
	min-width: 0;
}
legend {
	margin-left: 6px;
	padding: 0 2px;
	line-height: 16px;
}
.advice {
	display: flex;
	height: 93px;
	padding: 0 12px 0 15px;
}
.advice legend {
	margin-left: -9px;
}
.advice p {
	flex: 1;
	margin: 9px 8px 0 0;
	line-height: 17px;
}
.scroller {
	display: flex;
	flex-direction: column;
	justify-content: space-between;
	align-items: center;
	width: 20px;
	height: 57px;
	margin-top: 8px;
	padding: 7px 0;
	background-color: #f0f0f0;
}
.scroller svg {
	width: 10px;
	height: 6px;
}
.diag {
	height: 340px;
	margin-top: 7px;
}
.full {
	display: flex;
	align-items: center;
	gap: 3px;
	height: 20px;
	margin: 9px 0 14px 12px;
}
input[type=checkbox] {
	appearance: none;
	flex: none;
	width: 16px;
	height: 16px;
	margin: 0;
	border: 1px solid #222;
	background-color: #fff;
}
input[type=checkbox]:checked::after {
	content: "";
	display: block;
	width: 9px;
	height: 5px;
	margin: 3px 0 0 2px;
	border: solid #333;
	border-width: 0 0 1px 1px;
	transform: rotate(-45deg);
}
.check {
	display: grid;
	grid-template-columns: 25px 25px 56px 1fr;
	align-items: center;
	height: 25px;
	padding-left: 37px;
}
.check.sub {
	padding-left: 62px;
}
.check svg {
	width: 17px;
	height: 17px;
}
.btn.update {
	display: flex;
	align-items: center;
	width: 139px;
	height: 30px;
	margin: 13px 12px 0 auto;
	padding: 0 8px 0 3px;
}
.btn svg {
	width: 20px;
	height: 20px;
}
.btn span {
	flex: 1;
	text-align: center;
}
.update, .follow {
	font-family: "Liberation Sans", sans-serif;
	font-size: 13px;
}
.wiz-foot {
	display: flex;
	justify-content: flex-end;
	gap: 8px;
	margin-top: auto;
	padding-right: 15px;
}
.btn.follow {
	display: flex;
	align-items: center;
	width: 189px;
	padding: 0 8px 0 3px;
	text-shadow: 1px 1px #fff;
}
.sizer {
	position: absolute;
	right: 0;
	bottom: 0;
	width: 14px;
	height: 14px;
}
```

FILE: script.js
```js
var NS = 'http://www.w3.org/2000/svg'
var sky = '#badffa'

function add(parent, name, attrs, text) {
	var el = document.createElementNS(NS, name)
	for (var key in attrs) {
		el.setAttribute(key, attrs[key])
	}
	if (text) {
		el.textContent = text
	}
	parent.appendChild(el)
}

// ruler: ten ticks to the centimetre
var ruler = document.getElementById('ruler')
var cm = 213.6
for (var i = 0; i <= 68; i++) {
	var len = i % 10 == 0 ? 13 : i % 5 == 0 ? 8 : 4
	add(ruler, 'path', { d: 'M' + (Math.round(i * cm / 10) + 0.5) + ' 0v' + len, stroke: '#445566' })
}
for (var i = 0; i <= 6; i++) {
	add(ruler, 'text', { x: Math.max(7, Math.round(i * cm) - 1), y: 30, 'text-anchor': 'middle' }, String(i))
}
add(ruler, 'text', { x: 1490, y: 28, 'font-weight': 'bold' }, 'cm')

// openings between the flower petals on the face of the ring
var holes = [
	[757,228,800,197,828,245], [712,252,820,275,750,350], [614,330,690,272,708,348], [608,368,715,385,645,438],
	[775,370,848,295,880,390], [765,400,872,425,820,468], [486,400,560,350,500,425], [515,440,590,378,588,435],
	[718,443,735,410,745,445], [870,485,900,448,910,512], [835,165,862,140,905,180,850,238], [878,255,930,210,985,290],
	[870,288,975,315,910,385], [930,400,1000,335,1035,435], [925,435,1030,465,960,545], [1022,328,1080,400,1060,425],
	[980,565,1050,487,1085,590], [1083,478,1165,520,1140,585,1108,540], [1020,612,1080,615,1050,650],
	[1065,690,1105,645,1135,755], [1128,635,1230,665,1180,715], [1135,610,1175,562,1230,630], [1182,760,1250,688,1280,795],
	[1095,775,1128,780,1100,802], [1102,870,1148,802,1155,905], [1172,795,1278,825,1210,885], [1225,925,1295,850,1325,945],
	[1315,835,1350,880,1362,920,1345,950], [1100,930,1168,938,1110,1010], [1115,1040,1190,965,1228,1068],
	[1260,1090,1335,1008,1335,1070], [1365,1055,1370,1000,1410,1040], [1030,1160,1082,1080,1108,1195],
	[1115,1072,1207,1108,1132,1180], [1003,1190,1040,1215,1025,1275], [945,1270,980,1235,988,1300], [905,1312,945,1335,915,1350],
	[805,1387,875,1340,870,1378,835,1392], [1210,1145,1230,1128,1225,1148], [275,525,340,487,335,520], [365,455,440,462,380,485],
	[425,428,455,412,465,440], [185,645,230,580,235,600], [255,550,270,548,275,570], [175,680,190,670,190,695],
	[595,1415,630,1412,632,1425,600,1425], [670,1425,750,1402,740,1420], [1085,440,1118,447,1100,458]
]
// these ones look through to the back
var open = [10, 11, 12, 13, 16, 17, 20, 21, 22, 25, 26, 37]

function curved(p, cx, cy, size, bend) {
	var n = p.length
	var d = ''
	for (var k = 0; k <= n; k += 2) {
		var x = cx + (p[k % n] - cx) * size
		var y = cy + (p[(k + 1) % n] - cy) * size
		if (k == 0) {
			d = 'M' + x + ' ' + y
		} else {
			var mx = cx + ((p[k - 2] + p[k % n]) / 2 - cx) * size * bend
			var my = cy + ((p[k - 1] + p[(k + 1) % n]) / 2 - cy) * size * bend
			d += 'Q' + mx + ' ' + my + ' ' + x + ' ' + y
		}
	}
	return d + 'z'
}

var petals = document.getElementById('petals')
holes.forEach(function (p, index) {
	var cx = 0, cy = 0
	for (var k = 0; k < p.length; k += 2) {
		cx += p[k] / (p.length / 2)
		cy += p[k + 1] / (p.length / 2)
	}
	add(petals, 'path', { d: curved(p, cx, cy, 1.08, 0.42), fill: '#6b6b6b', stroke: '#252525', 'stroke-width': 3 })
	if (open.indexOf(index) >= 0) {
		add(petals, 'path', { d: curved(p, cx + 3, cy - 2, 0.42, 0.8), fill: sky, stroke: '#333', 'stroke-width': 2 })
		add(petals, 'path', { d: 'M' + (cx - 14) + ' ' + (cy + 5) + 'l28 -' + (index % 3 * 7), stroke: '#333', 'stroke-width': 7 })
		add(petals, 'path', { d: 'M' + (cx - 14) + ' ' + (cy + 5) + 'l28 -' + (index % 3 * 7), stroke: '#777', 'stroke-width': 4 })
	}
})

// cells on the inside of the ring, spread between its far and near edges
var far = [[250,625], [350,640], [450,740], [560,890], [650,1050], [710,1180], [738,1290], [728,1387]]
var near = [[300,560], [480,470], [740,475], [950,575], [1075,800], [1070,1000], [980,1200], [750,1382]]

function along(line, t) {
	var s = Math.max(0, Math.min(line.length - 1.001, t * (line.length - 1)))
	var k = Math.floor(s), f = s - k
	var a = line[Math.max(0, k - 1)], b = line[k], c = line[k + 1], e = line[Math.min(line.length - 1, k + 2)]
	return [0, 1].map(function (n) {
		return b[n] + f * (c[n] - a[n]) / 2 + f * f * (a[n] - 2.5 * b[n] + 2 * c[n] - e[n] / 2) + f * f * f * (1.5 * (b[n] - c[n]) + (e[n] - a[n]) / 2)
	})
}
function spot(u, v) {
	var a = along(far, u), b = along(near, u)
	return [a[0] + (b[0] - a[0]) * v, a[1] + (b[1] - a[1]) * v]
}
function cell(u, v, ru, rv, sides, turn) {
	var pts = []
	for (var k = 0; k < sides; k++) {
		var a = turn + k * 2 * Math.PI / sides
		pts.push(spot(u + ru * Math.cos(a), v + rv * Math.sin(a)).map(Math.round).join(' '))
	}
	return 'M' + pts.join('L') + 'z'
}

var lattice = document.getElementById('lattice')
for (var r = 0; r < 16; r++) {
	for (var c = 0; c < 6; c++) {
		var u = (r + 0.5) / 16
		var v = (c + (r % 2 ? 0.8 : 0.3)) / 6
		var small = (r + c * 2) % 5 == 0
		var sides = small ? 4 : 6
		var ru = small ? 0.032 : 0.036
		var rv = small ? 0.062 : 0.074
		var turn = (r + c) % 3 * 0.12
		add(lattice, 'path', { d: cell(u, v, ru, rv, sides, turn), fill: '#808080', stroke: '#222', 'stroke-width': 4 })
		add(lattice, 'path', { d: cell(u + 0.003, v + 0.004, ru * 0.84, rv * 0.84, sides, turn), fill: '#686868', stroke: '#2c2c2c', 'stroke-width': 2 })
		if (c < 4 || r > 11) {
			// the far wall shows up as struts, with daylight between some of them
			if ((r * 7 + c * 5) % 4 < 2) {
				add(lattice, 'path', { d: cell(u, v - 0.01, ru * 0.7, rv * 0.65, 3, turn + r), fill: sky, stroke: '#333', 'stroke-width': 2 })
			}
			add(lattice, 'path', { d: cell(u - 0.004, v + 0.02, ru * 0.7, rv * 0.2, 4, 0.6 + r % 3), fill: '#7c7c7c', stroke: '#333', 'stroke-width': 2 })
		}
	}
}
```
